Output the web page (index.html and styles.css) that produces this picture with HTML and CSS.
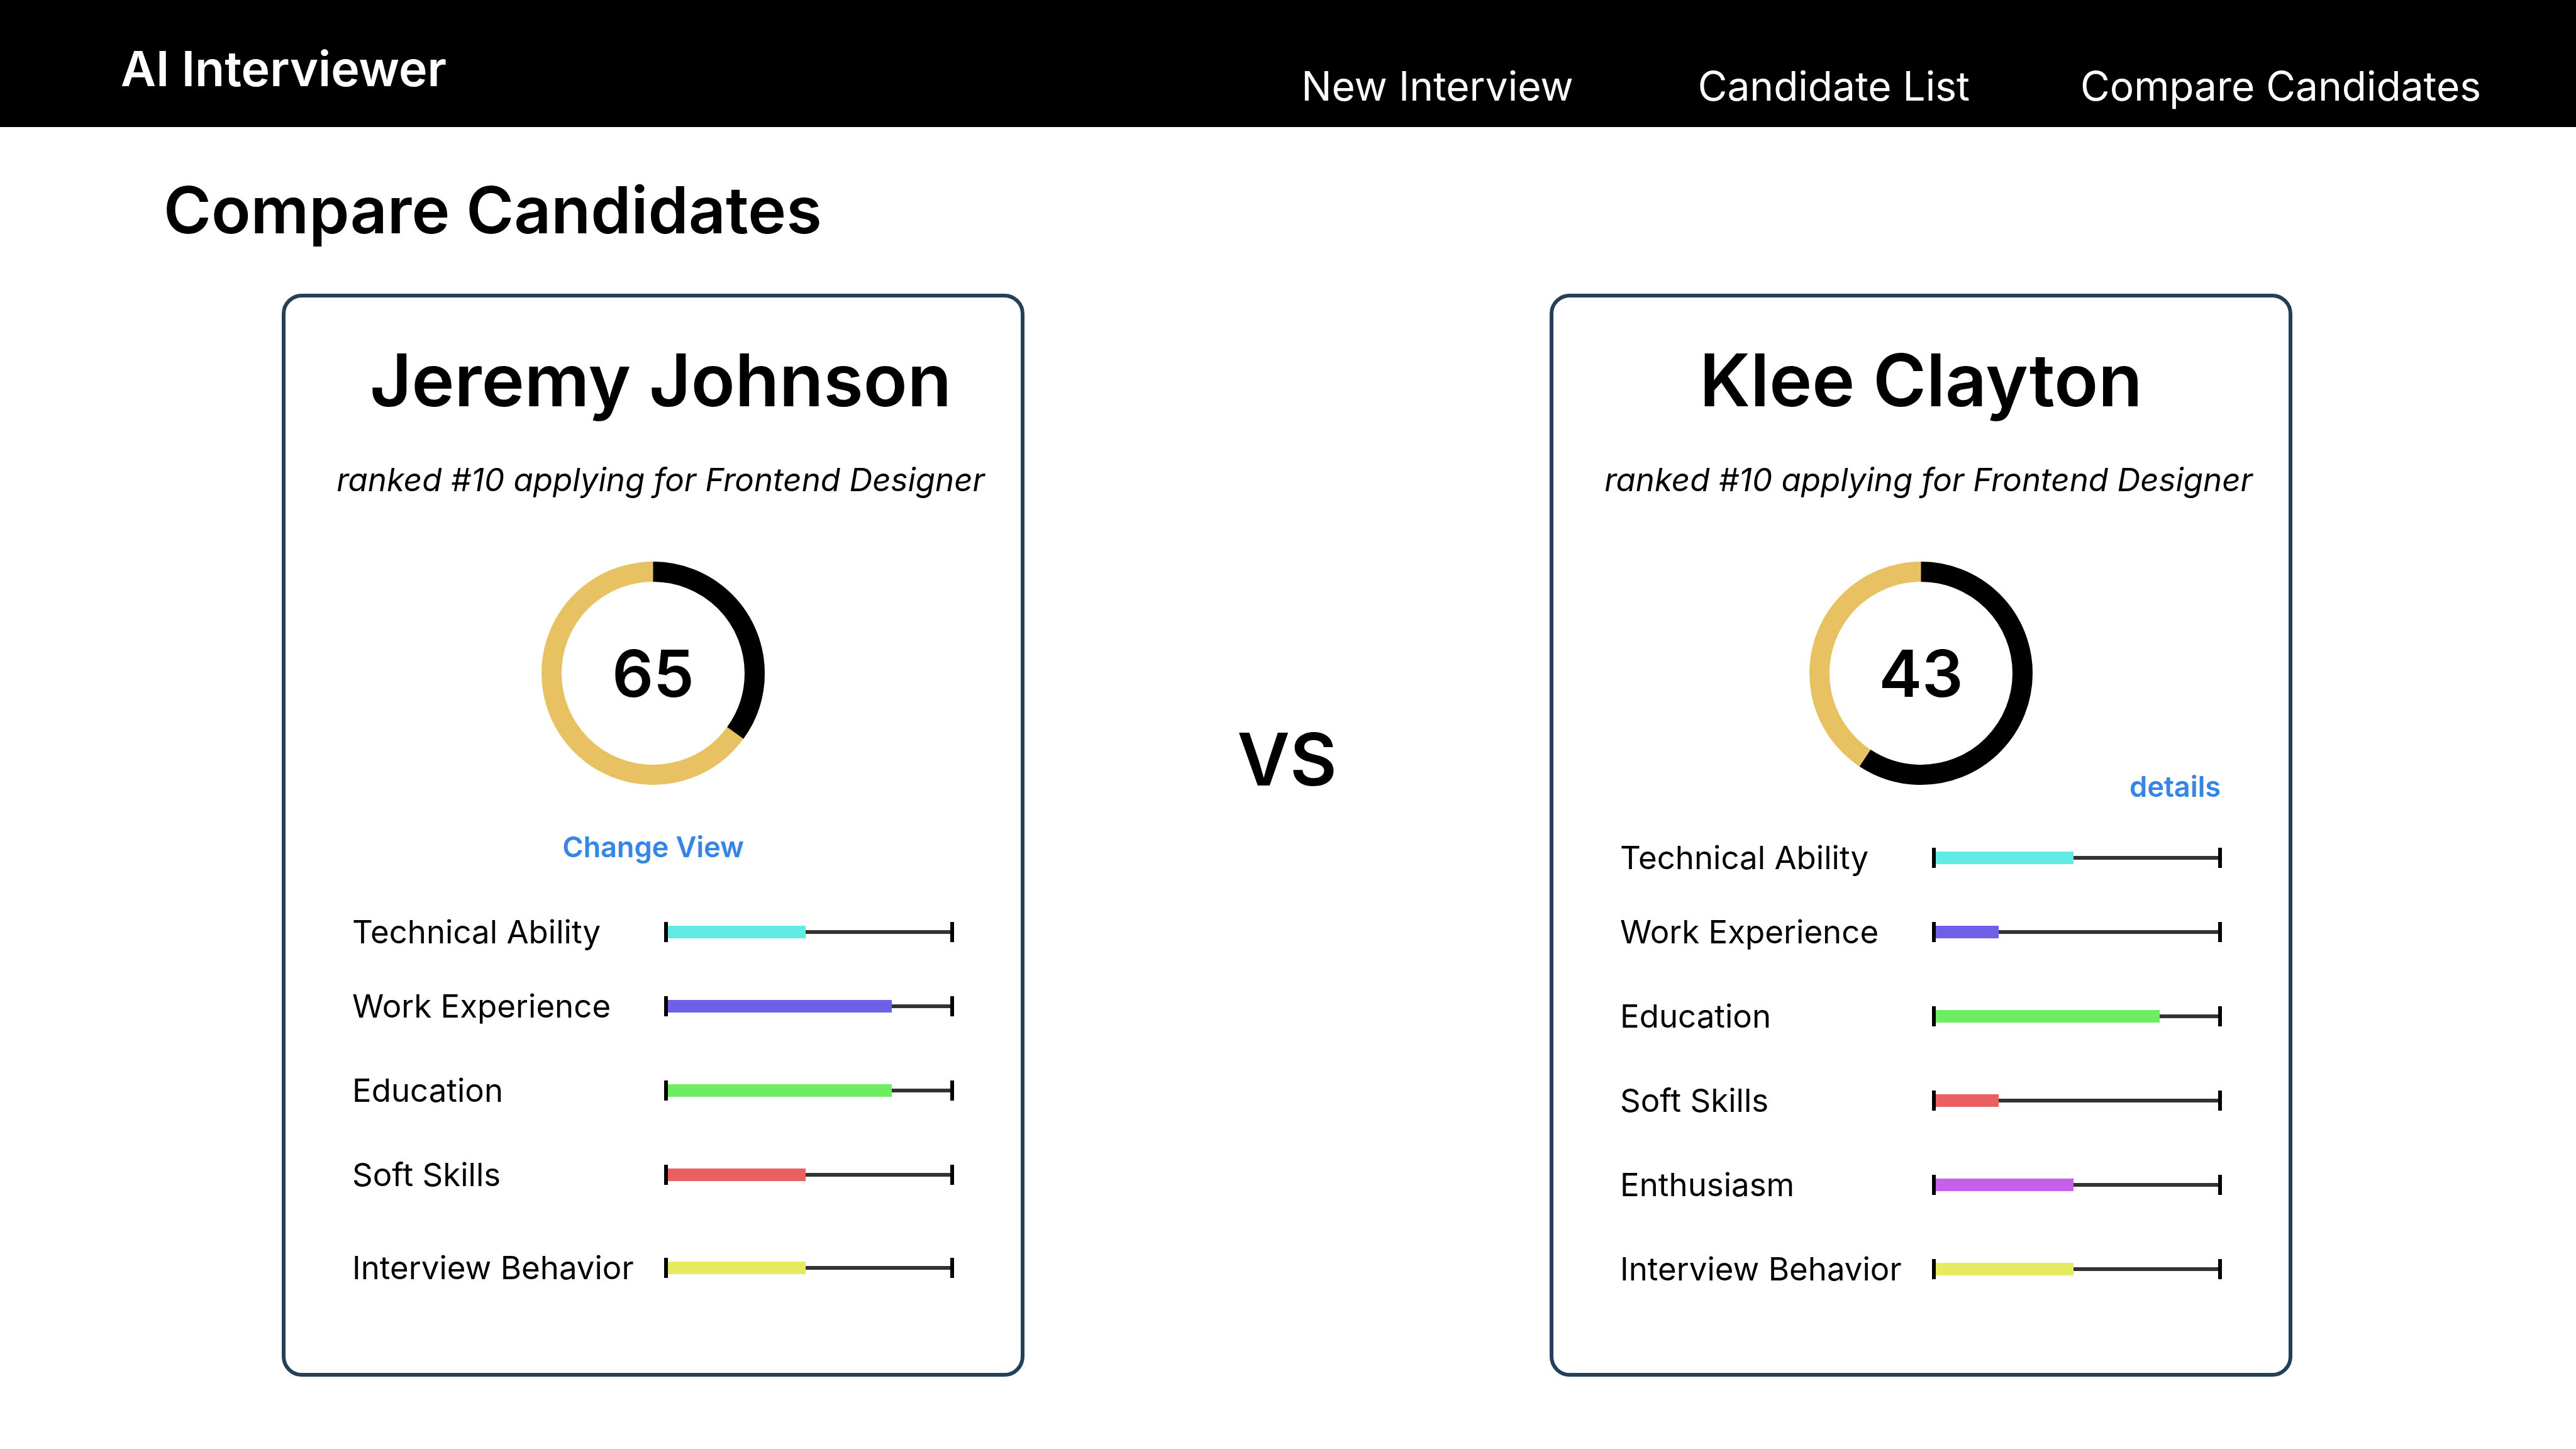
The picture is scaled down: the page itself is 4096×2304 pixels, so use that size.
FILE: index.html
```html
<!DOCTYPE html>
<html lang="en">
<head>
  <meta charset="utf-8">
  <meta name="viewport" content="width=device-width, initial-scale=1">
  <title>AI Interviewer - Compare Candidates</title>
  <link rel="stylesheet" href="styles.css">
</head>
<body>
  <header class="topbar">
    <a class="brand" href="#">AI Interviewer</a>
    <nav class="nav">
      <a class="nav-link" href="#">New Interview</a>
      <a class="nav-link nav-link-list" href="#">Candidate List</a>
      <a class="nav-link nav-link-compare" href="#">Compare Candidates</a>
    </nav>
  </header>

  <main class="page">
    <h1 class="page-title">Compare Candidates</h1>

    <div class="comparison">
      <section class="card">
        <h2 class="name name-long">Jeremy Johnson</h2>
        <p class="rank">ranked #10 applying for Frontend Designer</p>
        <div class="score">
          <svg class="score-ring" viewBox="0 0 444 444" aria-hidden="true">
            <circle class="ring-base" cx="222" cy="222" r="202"/>
            <circle class="ring-part" cx="222" cy="222" r="202" pathLength="360" stroke-dasharray="126 360"/>
          </svg>
          <span class="score-value">65</span>
        </div>
        <button class="action action-view" type="button">Change View</button>
        <ul class="skills skills-view">
          <li class="skill"><span class="skill-name">Technical Ability</span><span class="track"><span class="fill technical" style="width: 48.8%"></span></span></li>
          <li class="skill"><span class="skill-name">Work Experience</span><span class="track"><span class="fill work" style="width: 79.2%"></span></span></li>
          <li class="skill"><span class="skill-name">Education</span><span class="track"><span class="fill education" style="width: 79.2%"></span></span></li>
          <li class="skill"><span class="skill-name">Soft Skills</span><span class="track"><span class="fill soft" style="width: 48.8%"></span></span></li>
          <li class="skill"><span class="skill-name">Interview Behavior</span><span class="track"><span class="fill behavior" style="width: 48.8%"></span></span></li>
        </ul>
      </section>

      <p class="versus">VS</p>

      <section class="card">
        <h2 class="name">Klee Clayton</h2>
        <p class="rank">ranked #10 applying for Frontend Designer</p>
        <div class="score">
          <svg class="score-ring" viewBox="0 0 444 444" aria-hidden="true">
            <circle class="ring-base" cx="222" cy="222" r="202"/>
            <circle class="ring-part" cx="222" cy="222" r="202" pathLength="360" stroke-dasharray="213.4 360"/>
          </svg>
          <span class="score-value">43</span>
        </div>
        <a class="action action-details" href="#">details</a>
        <ul class="skills skills-details">
          <li class="skill"><span class="skill-name">Technical Ability</span><span class="track"><span class="fill technical" style="width: 48.8%"></span></span></li>
          <li class="skill"><span class="skill-name">Work Experience</span><span class="track"><span class="fill work" style="width: 22.2%"></span></span></li>
          <li class="skill"><span class="skill-name">Education</span><span class="track"><span class="fill education" style="width: 79.2%"></span></span></li>
          <li class="skill"><span class="skill-name">Soft Skills</span><span class="track"><span class="fill soft" style="width: 22.2%"></span></span></li>
          <li class="skill"><span class="skill-name">Enthusiasm</span><span class="track"><span class="fill enthusiasm" style="width: 48.8%"></span></span></li>
          <li class="skill"><span class="skill-name">Interview Behavior</span><span class="track"><span class="fill behavior" style="width: 48.8%"></span></span></li>
        </ul>
      </section>
    </div>
  </main>
</body>
</html>
```

FILE: styles.css
```css
* {
  box-sizing: border-box;
}

body {
  margin: 0;
  background: #fff;
  color: #000;
  font-family: Inter, "Liberation Sans", sans-serif;
}

h1, h2, p, ul {
  margin: 0;
  padding: 0;
}

a {
  color: inherit;
  text-decoration: none;
}

/* Top bar */
.topbar {
  display: flex;
  justify-content: space-between;
  align-items: flex-start;
  padding: 62px 151px 26px 192px;
  background: #000;
  color: #fff;
}

.brand {
  font-size: 77px;
  font-weight: 600;
  line-height: 94px;
}

.nav {
  display: flex;
  padding-top: 36px;
}

.nav-link {
  font-size: 64px;
  line-height: 78px;
}

.nav-link-list {
  margin-left: 198px;
}

.nav-link-compare {
  margin-left: 176px;
}

/* Page */
.page-title {
  padding: 70px 260px 71px;
  font-size: 103px;
  font-weight: 600;
  line-height: 124px;
}

.comparison {
  display: grid;
  grid-template-columns: 1181fr 835fr 1181fr;
  padding: 0 451px 115px 448px;
}

.versus {
  padding-top: 671px;
  font-size: 115px;
  font-weight: 600;
  line-height: 140px;
  text-align: center;
}

/* Candidate card */
.card {
  display: flex;
  flex-direction: column;
  align-items: center;
  padding: 62px 0 134px;
  border: 6px solid #23405b;
  border-radius: 32px;
}

.name {
  font-size: 115px;
  font-weight: 600;
  line-height: 140px;
}

.name-long {
  padding-left: 24px;
}

.rank {
  margin-top: 57px;
  padding-left: 24px;
  font-size: 51px;
  font-style: italic;
  line-height: 62px;
}

/* Score ring with its number in the middle */
.score {
  display: grid;
  place-items: center;
  margin-top: 99px;
}

.score-ring,
.score-value {
  grid-area: 1 / 1;
}

.score-ring {
  width: 355px;
  height: 355px;
  fill: none;
  stroke-width: 40;
  transform: rotate(-90deg);
}

.ring-base {
  stroke: #e8c262;
}

.ring-part {
  stroke: #000;
}

.score-value {
  font-size: 103px;
  font-weight: 600;
  line-height: 124px;
}

.action {
  padding: 0;
  border: 0;
  background: none;
  color: #3485e4;
  font-family: inherit;
  font-size: 45px;
  font-weight: 600;
  line-height: 54px;
  cursor: pointer;
}

.action-view {
  margin-top: 72px;
}

.action-details {
  align-self: flex-end;
  margin-top: -24px;
  margin-right: 108px;
}

/* Skill bars */
.skills {
  align-self: stretch;
  padding: 0 106px;
  list-style: none;
}

.skills-view {
  margin-top: 77px;
}

.skills-details {
  margin-top: 55px;
}

.skill {
  display: grid;
  grid-template-columns: 496fr 461fr;
  align-items: center;
  font-size: 51px;
  line-height: 62px;
}

.skill + .skill {
  margin-top: 72px;
}

.skill:nth-child(2) {
  margin-top: 56px;
}

.skills-view .skill:last-child {
  margin-top: 86px;
}

.skill-name {
  white-space: nowrap;
}

.track {
  display: flex;
  align-items: center;
  height: 32px;
  border: solid #000;
  border-width: 0 6px;
  background: linear-gradient(#333, #333) center / 100% 6px no-repeat;
}

.fill {
  height: 20px;
}

.technical { background: #62ebe2; }
.work { background: #6f60ea; }
.education { background: #6eed62; }
.soft { background: #ea6060; }
.enthusiasm { background: #c660ea; }
.behavior { background: #e6ea60; }
```
